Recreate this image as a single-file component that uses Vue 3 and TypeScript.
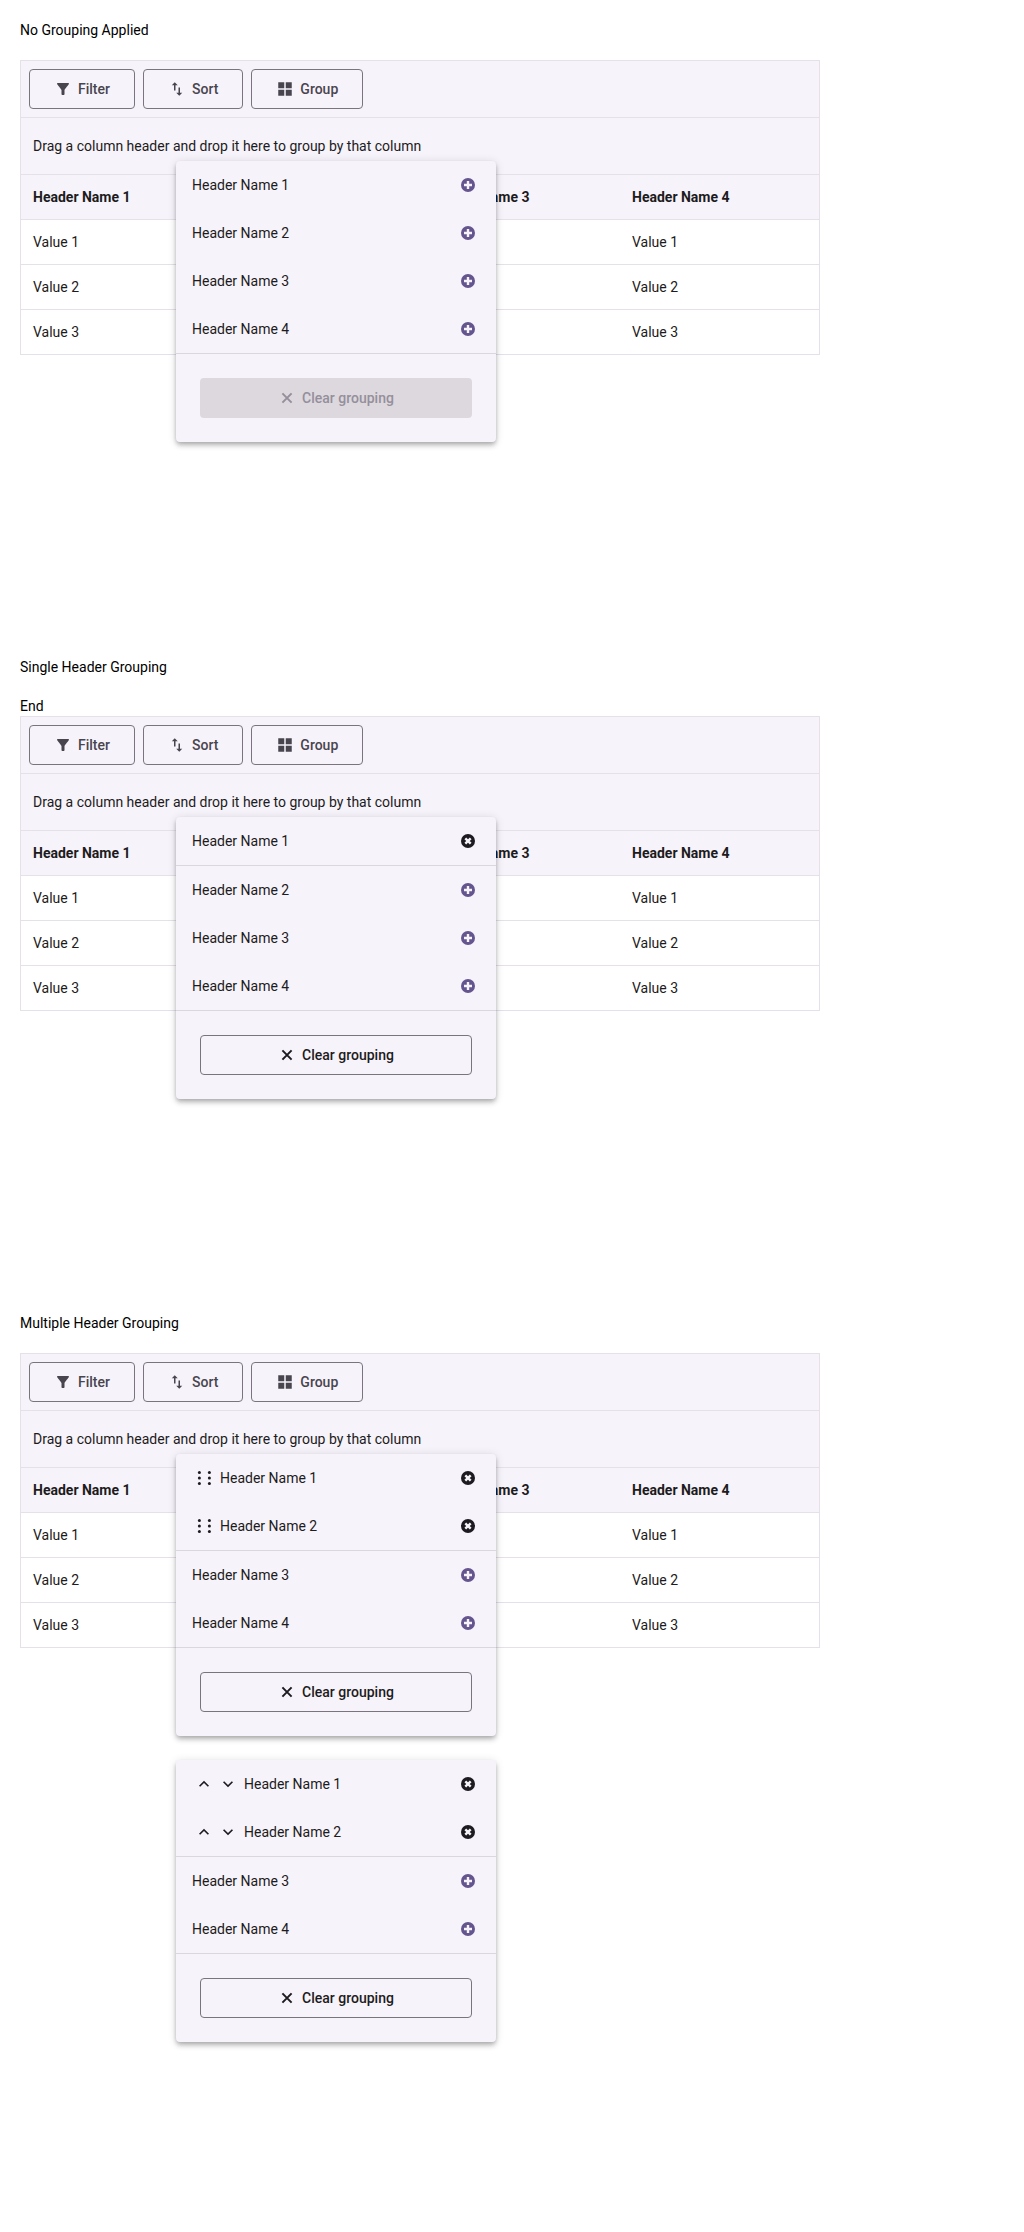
<script setup lang="ts">
type Mode = 'plain' | 'drag' | 'arrows'

interface MenuDef {
  selected: number
  mode: Mode
}

interface Section {
  title: string
  note?: string
  menus: MenuDef[]
}

const headers = ['Header Name 1', 'Header Name 2', 'Header Name 3', 'Header Name 4']
const rows = ['Value 1', 'Value 2', 'Value 3']

const sections: Section[] = [
  { title: 'No Grouping Applied', menus: [{ selected: 0, mode: 'plain' }] },
  { title: 'Single Header Grouping', note: 'End', menus: [{ selected: 1, mode: 'plain' }] },
  {
    title: 'Multiple Header Grouping',
    menus: [
      { selected: 2, mode: 'drag' },
      { selected: 2, mode: 'arrows' },
    ],
  },
]

const dotXs = [7.4, 17.4]
const dotYs = [6.5, 12, 17.5]
</script>

<template>
  <main class="page">
    <section v-for="s in sections" :key="s.title" class="demo">
      <p class="title">{{ s.title }}</p>
      <p v-if="s.note" class="note">{{ s.note }}</p>

      <div class="grid-wrap">
        <div class="grid">
          <div class="toolbar">
            <button class="tool-btn">
              <svg viewBox="0 0 24 24" width="18" height="18"><path d="M4.25 5.61C6.27 8.2 10 13 10 13v6c0 .55.45 1 1 1h2c.55 0 1-.45 1-1v-6s3.72-4.8 5.74-7.39c.51-.66.04-1.61-.79-1.61H5.04c-.83 0-1.3.95-.79 1.61z" /></svg>
              Filter
            </button>
            <button class="tool-btn">
              <svg viewBox="0 0 24 24" width="18" height="18"><path d="M16 17.01V10h-2v7.01h-3L15 21l4-3.99h-3zM9 3L5 6.99h3V14h2V6.99h3L9 3z" /></svg>
              Sort
            </button>
            <button class="tool-btn">
              <svg viewBox="0 0 24 24" width="18" height="18"><path d="M3 3v8h8V3H3zm10 0v8h8V3h-8zM3 13v8h8v-8H3zm10 0v8h8v-8h-8z" /></svg>
              Group
            </button>
          </div>

          <div class="drop-zone">Drag a column header and drop it here to group by that column</div>

          <div class="row head">
            <div v-for="h in headers" :key="h" class="cell">{{ h }}</div>
          </div>
          <div v-for="r in rows" :key="r" class="row">
            <div v-for="h in headers" :key="h" class="cell">{{ r }}</div>
          </div>
        </div>

        <div class="menus">
          <div v-for="(m, mi) in s.menus" :key="mi" class="menu">
            <div v-if="m.selected" class="menu-group">
              <div v-for="h in headers.slice(0, m.selected)" :key="h" class="menu-item">
                <span v-if="m.mode === 'drag'" class="controls">
                  <svg viewBox="0 0 24 24" width="24" height="24" class="ctl">
                    <template v-for="x in dotXs" :key="x">
                      <circle v-for="y in dotYs" :key="y" :cx="x" :cy="y" r="1.5" />
                    </template>
                  </svg>
                </span>
                <span v-else-if="m.mode === 'arrows'" class="controls">
                  <span class="arrow">
                    <svg viewBox="0 0 24 24" width="20" height="20" class="ctl"><path d="M7.41 15.41L12 10.83l4.59 4.58L18 14l-6-6-6 6z" /></svg>
                  </span>
                  <span class="arrow">
                    <svg viewBox="0 0 24 24" width="20" height="20" class="ctl"><path d="M7.41 8.59L12 13.17l4.59-4.58L18 10l-6 6-6-6z" /></svg>
                  </span>
                </span>
                <span class="item-label">{{ h }}</span>
                <svg viewBox="0 0 14 14" width="14" height="14" class="state">
                  <circle cx="7" cy="7" r="7" fill="#1d1b20" />
                  <path d="M4.3 4.3l5.4 5.4M9.7 4.3l-5.4 5.4" class="mark" />
                </svg>
              </div>
            </div>

            <div class="menu-group">
              <div v-for="h in headers.slice(m.selected)" :key="h" class="menu-item">
                <span class="item-label">{{ h }}</span>
                <svg viewBox="0 0 14 14" width="14" height="14" class="state">
                  <circle cx="7" cy="7" r="7" fill="#65558f" />
                  <path d="M7 3v8M3 7h8" class="mark" />
                </svg>
              </div>
            </div>

            <div class="menu-foot">
              <button class="clear-btn" :class="{ disabled: !m.selected }">
                <svg viewBox="0 0 18 18" width="18" height="18"><path d="M4.4 4.4l9.2 9.2M13.6 4.4l-9.2 9.2" /></svg>
                Clear grouping
              </button>
            </div>
          </div>
        </div>
      </div>
    </section>
  </main>
</template>

<style>
body {
  background: #fff;
}
</style>

<style scoped>
.page {
  box-sizing: border-box;
  min-height: 2232px;
  padding: 20px;
  font-family: Roboto, "Noto Sans", sans-serif;
  font-size: 14px;
  line-height: 20px;
  color: #000;
}
.demo {
  margin-bottom: 302px;
}
.demo:last-child {
  margin-bottom: 0;
}
.title {
  margin: 0 0 20px;
}
.note {
  margin: -1px 0 0;
}
.grid-wrap {
  position: relative;
  width: 800px;
}
.grid {
  border: 1px solid #e6e0e9;
  box-sizing: border-box;
  color: #1d1b20;
}
.toolbar {
  display: flex;
  gap: 8px;
  padding: 8px;
  background: #f6f3fb;
  border-bottom: 1px solid #e6e0e9;
}
.tool-btn,
.clear-btn {
  display: inline-flex;
  align-items: center;
  justify-content: center;
  gap: 6px;
  box-sizing: border-box;
  height: 40px;
  padding: 0 24px;
  border: 1px solid #79747e;
  border-radius: 4px;
  background: transparent;
  font: 500 14px/20px Roboto, "Noto Sans", sans-serif;
  cursor: pointer;
}
.tool-btn {
  color: #49454f;
}
.tool-btn svg {
  fill: #49454f;
}
.drop-zone {
  box-sizing: border-box;
  height: 57px;
  padding: 18px 12px;
  background: #f6f3fb;
  border-bottom: 1px solid #e6e0e9;
}
.row {
  display: grid;
  grid-template-columns: 199px 200px 200px 1fr;
  height: 45px;
  box-sizing: border-box;
  border-bottom: 1px solid #e6e0e9;
}
.row:last-child {
  border-bottom: none;
  height: 44px;
}
.row.head {
  background: #f6f3fb;
  font-weight: 700;
}
.cell {
  display: flex;
  align-items: center;
  padding: 0 12px;
}

.menus {
  position: absolute;
  left: 156px;
  top: 101px;
  display: flex;
  flex-direction: column;
  gap: 24px;
}
.menu {
  width: 320px;
  background: #f6f3fb;
  border-radius: 4px;
  box-shadow: 0 2px 4px -1px rgba(0, 0, 0, 0.2), 0 4px 5px rgba(0, 0, 0, 0.14), 0 1px 10px rgba(0, 0, 0, 0.12);
  color: #1d1b20;
}
.menu-group {
  border-bottom: 1px solid #dbd7e1;
}
.menu-item {
  display: flex;
  align-items: center;
  height: 48px;
  padding: 0 21px 0 16px;
}
.item-label {
  flex: 1;
  color: #1d1b20;
}
.controls {
  display: flex;
  margin-right: 4px;
}
.arrow {
  display: flex;
  align-items: center;
  justify-content: center;
  width: 24px;
  height: 24px;
}
.ctl {
  fill: #1d1b20;
}
.state {
  flex: none;
}
.mark {
  fill: none;
  stroke: #f6f3fb;
  stroke-width: 2.4;
}
.menu-foot {
  padding: 24px;
}
.clear-btn {
  width: 100%;
  color: #1d1b20;
}
.clear-btn svg {
  fill: none;
  stroke: #1d1b20;
  stroke-width: 2;
}
.clear-btn.disabled {
  border-color: transparent;
  background: #dcd8de;
  color: #958f9b;
}
.clear-btn.disabled svg {
  stroke: #958f9b;
}
</style>
